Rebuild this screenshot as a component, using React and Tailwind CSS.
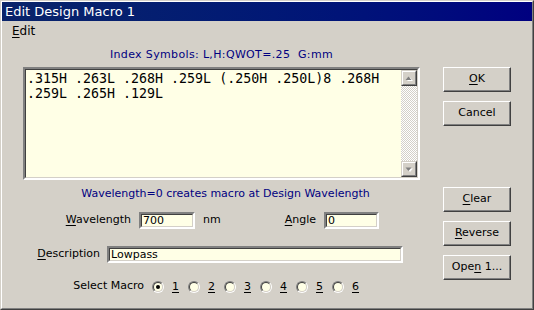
import React, { useState } from 'react';

const ui = "font-['DejaVu_Sans',sans-serif]";

const sunken =
  'border-2 border-t-[#808080] border-l-[#808080] border-r-white border-b-white';

const Field = ({ value, width }) => (
  <div className={`${sunken} h-[17px] bg-[#ffffe6] ${width}`}>
    <div className="h-full border border-t-[#404040] border-l-[#404040] border-r-[#d4d0c8] border-b-[#d4d0c8] pl-[1px] text-[11px] leading-[11px] text-black">
      {value}
    </div>
  </div>
);

const Button = ({ children, className = '' }) => (
  <button
    className={`h-[25px] w-[68px] border border-t-white border-l-white border-r-[#404040] border-b-[#404040] bg-[#d4d0c8] shadow-[inset_-1px_-1px_0_#808080] text-[11px] text-black ${className}`}
  >
    {children}
  </button>
);

const ScrollButton = ({ up }) => (
  <div className="h-[16px] w-[16px] border border-t-[#d4d0c8] border-l-[#d4d0c8] border-r-[#404040] border-b-[#404040] bg-[#d4d0c8]">
    <div className="flex h-full w-full items-center justify-center border border-t-white border-l-white border-r-[#808080] border-b-[#808080]">
      <svg width="8" height="5" viewBox="0 0 8 5">
        {up ? (
          <>
            <path d="M1 5 L4 1.5 L7 5 Z" fill="#ffffff" transform="translate(1 0)" />
            <path d="M0.5 4 L3.5 0.5 L6.5 4 Z" fill="#808080" />
          </>
        ) : (
          <>
            <path d="M1 1 L4 4.5 L7 1 Z" fill="#ffffff" transform="translate(1 0.5)" />
            <path d="M0.5 0.5 L3.5 4 L6.5 0.5 Z" fill="#808080" />
          </>
        )}
      </svg>
    </div>
  </div>
);

const Radio = ({ n, checked, onClick }) => (
  <div className="flex w-[36px] items-center" onClick={onClick}>
    <div className="h-[12px] w-[12px] rounded-full border border-t-[#808080] border-l-[#808080] border-r-white border-b-white">
      <div className="flex h-full w-full items-center justify-center rounded-full border border-t-[#404040] border-l-[#404040] border-r-[#d4d0c8] border-b-[#d4d0c8] bg-[#ffffe6]">
        {checked && <div className="h-[4px] w-[4px] rounded-full bg-black" />}
      </div>
    </div>
    <span className="ml-[8px] text-[11px] leading-[13px] underline underline-offset-2">{n}</span>
  </div>
);

export default function App() {
  const [macro, setMacro] = useState(1);

  return (
    <div className={`${ui} h-[310px] w-[534px] select-none border border-t-[#d4d0c8] border-l-[#d4d0c8] border-r-[#404040] border-b-[#404040] bg-[#d4d0c8]`}>
      <div className="flex h-full flex-col border border-t-white border-l-white border-r-[#808080] border-b-[#808080]">
        {/* title bar */}
        <div className="flex h-[19px] items-center bg-gradient-to-r from-[#0a246a] to-[#000080] pl-[3px] text-[13px] text-white">
          Edit Design Macro 1
        </div>

        {/* menu */}
        <div className="flex h-[20px] items-center pl-[10px] text-[12px] text-black">
          <span>
            <u className="underline-offset-2">E</u>dit
          </span>
        </div>

        <div className="flex pl-[21px]">
          {/* left column */}
          <div className="flex w-[397px] flex-col">
            <div className="mt-[7px] h-[13px] text-center text-[11px] leading-[13px] tracking-[0.35px] text-[#000080] whitespace-pre">
              Index Symbols: L,H:QWOT=.25  G:mm
            </div>

            <div className={`${sunken} mt-[6px] h-[113px] bg-[#ffffe6]`}>
              <div className="flex h-full border border-t-[#404040] border-l-[#404040] border-r-[#d4d0c8] border-b-[#d4d0c8]">
                <div className="flex-1 pl-[1px] pt-[1px] font-['DejaVu_Sans_Mono',monospace] text-[13.3px] leading-[15px] text-black whitespace-pre">
                  <div>.315H .263L .268H .259L (.250H .250L)8 .268H</div>
                  <div>.259L .265H .129L</div>
                </div>
                <div className="flex w-[16px] flex-col bg-[repeating-conic-gradient(#d4d0c8_0_25%,#ffffff_0_50%)] bg-[length:2px_2px]">
                  <ScrollButton up />
                  <div className="flex-1" />
                  <ScrollButton />
                </div>
              </div>
            </div>

            <div className="mt-[7px] h-[13px] pl-[8px] text-center text-[11px] leading-[13px] text-[#000080]">
              Wavelength=0 creates macro at Design Wavelength
            </div>

            <div className="mt-[12px] flex h-[17px] items-center text-[11px] text-black">
              <span className="w-[108px] text-right">
                <u className="underline-offset-2">W</u>avelength
              </span>
              <div className="ml-[8px]">
                <Field value="700" width="w-[56px]" />
              </div>
              <span className="ml-[8px] w-[81px]">nm</span>
              <span className="w-[32px] text-right">
                <u className="underline-offset-2">A</u>ngle
              </span>
              <div className="ml-[8px]">
                <Field value="0" width="w-[55px]" />
              </div>
            </div>

            <div className="mt-[17px] flex h-[17px] items-center text-[11px] text-black">
              <span className="w-[77px] text-right">
                <u className="underline-offset-2">D</u>escription
              </span>
              <div className="ml-[7px]">
                <Field value="Lowpass" width="w-[296px]" />
              </div>
            </div>

            <div className="mt-[17px] flex h-[13px] items-center text-[11px] text-black">
              <span className="w-[121px] text-right">Select Macro</span>
              <div className="ml-[8px] flex">
                {[1, 2, 3, 4, 5, 6].map((n) => (
                  <Radio key={n} n={n} checked={macro === n} onClick={() => setMacro(n)} />
                ))}
              </div>
            </div>
          </div>

          {/* buttons */}
          <div className="ml-[23px] mt-[26px] flex flex-col">
            <Button>
              <u className="underline-offset-2">O</u>K
            </Button>
            <Button className="mt-[9px]">Cancel</Button>
            <Button className="mt-[61px]">
              <u className="underline-offset-2">C</u>lear
            </Button>
            <Button className="mt-[9px]">
              <u className="underline-offset-2">R</u>everse
            </Button>
            <Button className="mt-[9px]">
              Ope<u className="underline-offset-2">n</u> 1...
            </Button>
          </div>
        </div>
      </div>
    </div>
  );
}
